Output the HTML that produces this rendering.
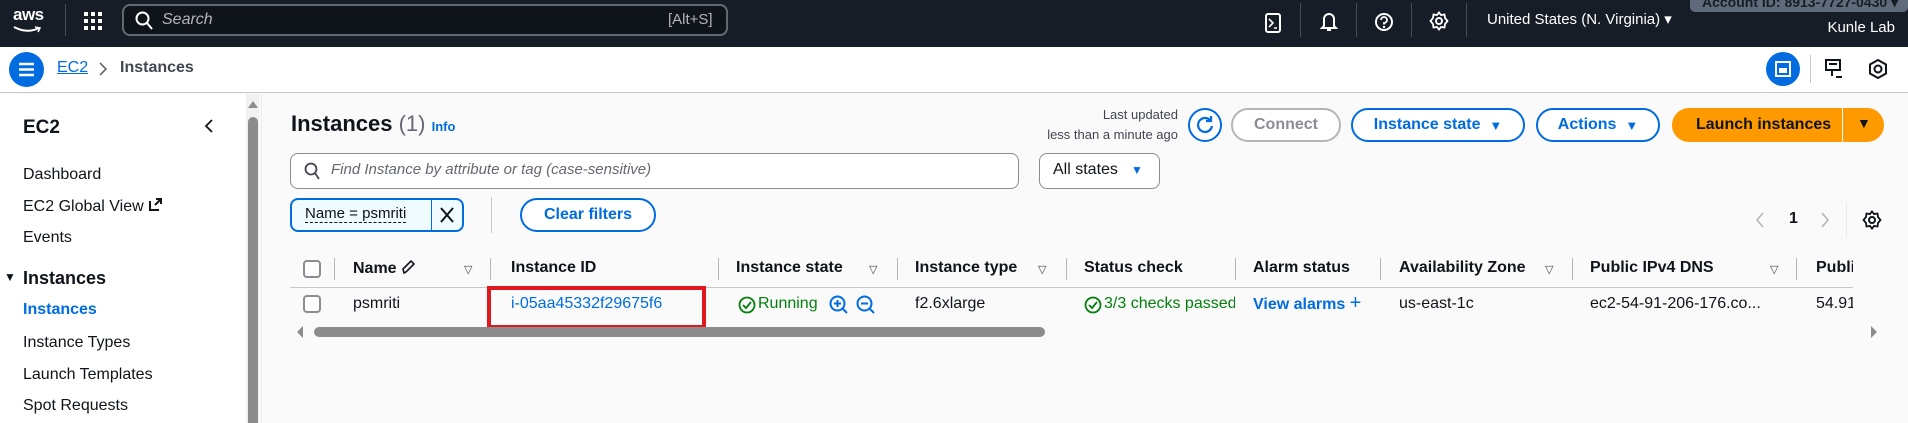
<!DOCTYPE html>
<html><head><meta charset="utf-8"><style>
*{box-sizing:border-box;margin:0;padding:0}
body{width:1908px;height:423px;overflow:hidden;font-family:"Liberation Sans",sans-serif;color:#0f141a;background:#fafafa;position:relative;font-size:16px}
.a{position:absolute;white-space:nowrap}
.top{position:absolute;left:0;top:0;width:1908px;height:47px;background:#161d26;color:#fff}
.crumb{position:absolute;left:0;top:47px;width:1908px;height:46px;background:#fff;border-bottom:1px solid #c6c6cd}
.side{position:absolute;left:0;top:94px;width:246px;height:329px;background:#fff}
.btn{position:absolute;border:2px solid #006ce0;border-radius:20px;color:#006ce0;font-weight:bold;font-size:16px;display:flex;align-items:center;justify-content:center;background:#fff}
.hd{font-weight:bold;font-size:16px;color:#0f141a;top:259px}
.sep{position:absolute;top:258px;width:1px;height:22px;background:#b4b4bb}
.tri{font-size:11px;color:#424650}
.nav{left:23px;font-size:16px;color:#0f141a}
.cb{position:absolute;width:18px;height:18px;border:2px solid #8c8c94;border-radius:4px;background:#fff}
</style></head><body>
<div class="top">
 <div class="a" style="left:13px;top:5px;font-size:17px;font-weight:bold;letter-spacing:-0.5px">aws</div>
 <svg class="a" style="left:12px;top:25px" width="30" height="10"><path d="M2 2 Q15 9 27 3" stroke="#fff" stroke-width="2" fill="none"/><path d="M23 2 L28 3 L26 7" stroke="#fff" stroke-width="1.5" fill="none"/></svg>
 <div class="a" style="left:65px;top:4px;width:1px;height:32px;background:#414d5c"></div>
 <svg class="a" style="left:84px;top:12px" width="18" height="18" fill="#fff"><rect x="0" y="0" width="4" height="4"/><rect x="7" y="0" width="4" height="4"/><rect x="14" y="0" width="4" height="4"/><rect x="0" y="7" width="4" height="4"/><rect x="7" y="7" width="4" height="4"/><rect x="14" y="7" width="4" height="4"/><rect x="0" y="14" width="4" height="4"/><rect x="7" y="14" width="4" height="4"/><rect x="14" y="14" width="4" height="4"/></svg>
 <div class="a" style="left:122px;top:4px;width:606px;height:32px;border:2px solid #656871;border-radius:8px;background:#0f141a"></div>
 <svg class="a" style="left:135px;top:11px" width="18" height="20"><circle cx="7.5" cy="7.5" r="6" stroke="#fff" stroke-width="2" fill="none"/><path d="M12 12 L17 18" stroke="#fff" stroke-width="2"/></svg>
 <div class="a" style="left:162px;top:11px;font-style:italic;color:#b4b4bb;font-size:16px">Search</div>
 <div class="a" style="left:668px;top:11px;color:#b4b4bb;font-size:15px">[Alt+S]</div>
 <svg class="a" style="left:1265px;top:13px" width="16" height="20"><rect x="1" y="1" width="14" height="18" rx="2" stroke="#fff" stroke-width="2" fill="none"/><path d="M4 6 L8 10 L4 14 M9 15 H12" stroke="#fff" stroke-width="1.6" fill="none"/></svg>
 <div class="a" style="left:1300px;top:3px;width:1px;height:34px;background:#414d5c"></div>
 <svg class="a" style="left:1320px;top:11px" width="18" height="22"><path d="M4 15 V8 A5 5 0 0 1 14 8 V15 L16 17 H2 Z" stroke="#fff" stroke-width="2" fill="none"/><path d="M7 19 H11" stroke="#fff" stroke-width="2"/></svg>
 <div class="a" style="left:1356px;top:3px;width:1px;height:34px;background:#414d5c"></div>
 <svg class="a" style="left:1374px;top:12px" width="20" height="20"><circle cx="10" cy="10" r="8" stroke="#fff" stroke-width="2" fill="none"/><path d="M7 8 A3 3 0 1 1 10 11 V12.5" stroke="#fff" stroke-width="1.8" fill="none"/><circle cx="10" cy="15" r="1.2" fill="#fff"/></svg>
 <div class="a" style="left:1411px;top:3px;width:1px;height:34px;background:#414d5c"></div>
 <svg class="a" style="left:1429px;top:11px" width="20" height="20"><circle cx="10" cy="10" r="3" stroke="#fff" stroke-width="2" fill="none"/><path d="M10 1.5 L12 4 L15.5 3.5 L16 7 L18.5 10 L16 13 L15.5 16.5 L12 16 L10 18.5 L8 16 L4.5 16.5 L4 13 L1.5 10 L4 7 L4.5 3.5 L8 4 Z" stroke="#fff" stroke-width="1.8" fill="none"/></svg>
 <div class="a" style="left:1466px;top:3px;width:1px;height:34px;background:#414d5c"></div>
 <div class="a" style="left:1487px;top:10px;font-size:15px;color:#fff">United States (N. Virginia) ▾</div>
 <div class="a" style="left:1690px;top:-8px;width:218px;height:20px;background:#5f6b7a;border-radius:5px;font-size:14px;font-weight:bold;color:#161d26;padding:3px 0 0 12px;line-height:14px">Account ID: 8913-7727-0430 ▾</div>
 <div class="a" style="right:13px;top:19px;font-size:15px;color:#fff">Kunle Lab</div>
</div>
<div class="crumb">
 <div class="a" style="left:9px;top:5px;width:35px;height:35px;border-radius:50%;background:#006ce0"></div>
 <svg class="a" style="left:18px;top:15px" width="17" height="15"><path d="M1 2 H16 M1 7.5 H16 M1 13 H16" stroke="#fff" stroke-width="2.5"/></svg>
 <div class="a" style="left:57px;top:12px;color:#006ce0;font-size:16px;text-decoration:underline">EC2</div>
 <svg class="a" style="left:98px;top:14px" width="10" height="16"><path d="M2 2 L8 8 L2 14" stroke="#656871" stroke-width="1.6" fill="none"/></svg>
 <div class="a" style="left:120px;top:12px;font-size:16px;font-weight:bold;color:#424650">Instances</div>
 <div class="a" style="left:1766px;top:5px;width:34px;height:34px;border-radius:50%;background:#006ce0"></div>
 <svg class="a" style="left:1774px;top:13px" width="18" height="18"><rect x="2" y="2" width="14" height="14" stroke="#fff" stroke-width="2" fill="none"/><rect x="5" y="8" width="8" height="5" fill="#fff"/></svg>
 <div class="a" style="left:1810px;top:8px;width:1px;height:28px;background:#c6c6cd"></div>
 <svg class="a" style="left:1824px;top:11px" width="20" height="22"><rect x="2" y="2" width="14" height="10" stroke="#0f141a" stroke-width="2" fill="none"/><path d="M5 6 H13 M8 12 V18 M12 19 H18" stroke="#0f141a" stroke-width="2"/></svg>
 <svg class="a" style="left:1868px;top:12px" width="20" height="20"><path d="M10 1 L18 5.5 V14.5 L10 19 L2 14.5 V5.5 Z" stroke="#0f141a" stroke-width="2" fill="none"/><circle cx="10" cy="10" r="3.5" stroke="#0f141a" stroke-width="2" fill="none"/></svg>
</div>
<div class="side">
 <div class="a" style="left:23px;top:23px;font-size:19px;font-weight:bold">EC2</div>
 <svg class="a" style="left:204px;top:24px" width="10" height="16"><path d="M8 2 L2 8 L8 14" stroke="#0f141a" stroke-width="1.8" fill="none"/></svg>
</div>
<div class="a nav" style="top:166px">Dashboard</div>
<div class="a nav" style="top:198px">EC2 Global View <svg width="15" height="14" style="vertical-align:-1px"><path d="M2 3 V12 H11 M7 7 L13 1 M8 1 H13 V6" stroke="#0f141a" stroke-width="2" fill="none"/></svg></div>
<div class="a nav" style="top:229px">Events</div>
<div class="a" style="left:4px;top:270px;font-size:12px">▼</div>
<div class="a nav" style="top:268px;font-size:18px;font-weight:bold">Instances</div>
<div class="a nav" style="top:301px;color:#006ce0;font-weight:bold">Instances</div>
<div class="a nav" style="top:334px">Instance Types</div>
<div class="a nav" style="top:366px">Launch Templates</div>
<div class="a nav" style="top:397px">Spot Requests</div>
<div class="a" style="left:246px;top:94px;width:13px;height:329px;background:#f1f1f1"></div>
<div class="a" style="left:248px;top:117px;width:10px;height:306px;background:#8c8c8c;border-radius:5px 5px 0 0"></div>
<svg class="a" style="left:247px;top:99px" width="12" height="10"><path d="M1 9 L6 2 L11 9 Z" fill="#8c8c8c"/></svg>
<div class="a" style="left:261px;top:94px;width:1px;height:329px;background:#e9ebed"></div>

<div class="a" style="left:291px;top:111px;font-size:22px;font-weight:bold">Instances <span style="font-weight:normal;color:#656871">(1)</span> <span style="font-size:13px;color:#006ce0">Info</span></div>
<div class="a" style="right:730px;top:105px;font-size:13px;color:#424650;text-align:right;line-height:20px">Last updated<br>less than a minute ago</div>
<div class="a" style="left:1188px;top:108px;width:34px;height:34px;border:2px solid #006ce0;border-radius:50%;background:#fff"></div>
<svg class="a" style="left:1195px;top:115px" width="20" height="20"><path d="M15 5 A7 7 0 1 0 17 11" stroke="#006ce0" stroke-width="2.2" fill="none"/><path d="M11 4 H16 V-1" stroke="#006ce0" stroke-width="2.2" fill="none" transform="translate(0,2)"/></svg>
<div class="btn" style="left:1231px;top:108px;width:110px;height:34px;border-color:#b4b4bb;color:#8c8c94">Connect</div>
<div class="btn" style="left:1351px;top:108px;width:174px;height:34px">Instance state&nbsp;&nbsp;<span style="font-size:13px">▼</span></div>
<div class="btn" style="left:1536px;top:108px;width:124px;height:34px">Actions&nbsp;&nbsp;<span style="font-size:13px">▼</span></div>
<div class="btn" style="left:1672px;top:108px;width:212px;height:34px;background:#ff9900;border-color:#ff9900;color:#0f141a;justify-content:flex-start;padding-left:22px">Launch instances</div>
<div class="a" style="left:1842px;top:108px;width:1px;height:34px;background:#fff"></div>
<div class="a" style="left:1857px;top:115px;font-size:14px">▼</div>

<div class="a" style="left:290px;top:153px;width:729px;height:36px;border:1.5px solid #8c8c94;border-radius:8px;background:#fff"></div>
<svg class="a" style="left:304px;top:162px" width="16" height="20"><circle cx="7" cy="7" r="5.5" stroke="#424650" stroke-width="1.8" fill="none"/><path d="M11 11 L15 17" stroke="#424650" stroke-width="1.8"/></svg>
<div class="a" style="left:331px;top:161px;font-size:15px;font-style:italic;color:#656871">Find Instance by attribute or tag (case-sensitive)</div>
<div class="a" style="left:1039px;top:153px;width:121px;height:36px;border:1.5px solid #8c8c94;border-radius:8px;background:#fff"></div>
<div class="a" style="left:1053px;top:161px;font-size:16px">All states</div>
<div class="a" style="left:1131px;top:163px;font-size:12px;color:#006ce0">▼</div>

<div class="a" style="left:290px;top:198px;width:174px;height:34px;border:2px solid #006ce0;border-radius:8px;background:#f0fbff"></div>
<div class="a" style="left:431px;top:200px;width:1px;height:30px;background:#006ce0"></div>
<div class="a" style="left:305px;top:205px;font-size:15px;border-bottom:1px dashed #0f141a;line-height:17px">Name = psmriti</div>
<svg class="a" style="left:439px;top:206px" width="16" height="18"><path d="M2 2 L14 16 M14 2 L2 16" stroke="#0f141a" stroke-width="2"/></svg>
<div class="a" style="left:491px;top:197px;width:1px;height:36px;background:#c6c6cd"></div>
<div class="btn" style="left:520px;top:198px;width:136px;height:34px">Clear filters</div>

<svg class="a" style="left:1754px;top:211px" width="12" height="18"><path d="M9 2 L3 9 L9 16" stroke="#b4b4bb" stroke-width="1.6" fill="none"/></svg>
<div class="a" style="left:1789px;top:210px;font-size:16px;font-weight:bold">1</div>
<svg class="a" style="left:1819px;top:211px" width="12" height="18"><path d="M3 2 L9 9 L3 16" stroke="#b4b4bb" stroke-width="1.6" fill="none"/></svg>
<div class="a" style="left:1846px;top:202px;width:1px;height:36px;background:#e9ebed"></div>
<svg class="a" style="left:1862px;top:210px" width="20" height="20"><circle cx="10" cy="10" r="3" stroke="#0f141a" stroke-width="2" fill="none"/><path d="M10 1.5 L12 4 L15.5 3.5 L16 7 L18.5 10 L16 13 L15.5 16.5 L12 16 L10 18.5 L8 16 L4.5 16.5 L4 13 L1.5 10 L4 7 L4.5 3.5 L8 4 Z" stroke="#0f141a" stroke-width="1.8" fill="none"/></svg>

<div class="cb" style="left:303px;top:260px"></div>
<div class="sep" style="left:334px"></div>
<div class="a hd" style="left:353px">Name <svg width="14" height="16" style="vertical-align:-2px"><path d="M3 14 L2 10 L10 2 L13 5 L5 13 Z" stroke="#0f141a" stroke-width="1.6" fill="none"/></svg></div>
<div class="a tri" style="left:464px;top:263px">▽</div>
<div class="sep" style="left:490px"></div>
<div class="a hd" style="left:511px">Instance ID</div>
<div class="sep" style="left:718px"></div>
<div class="a hd" style="left:736px">Instance state</div>
<div class="a tri" style="left:869px;top:263px">▽</div>
<div class="sep" style="left:897px"></div>
<div class="a hd" style="left:915px">Instance type</div>
<div class="a tri" style="left:1038px;top:263px">▽</div>
<div class="sep" style="left:1066px"></div>
<div class="a hd" style="left:1084px">Status check</div>
<div class="sep" style="left:1235px"></div>
<div class="a hd" style="left:1253px">Alarm status</div>
<div class="sep" style="left:1380px"></div>
<div class="a hd" style="left:1399px">Availability Zone</div>
<div class="a tri" style="left:1545px;top:263px">▽</div>
<div class="sep" style="left:1572px"></div>
<div class="a hd" style="left:1590px">Public IPv4 DNS</div>
<div class="a tri" style="left:1770px;top:263px">▽</div>
<div class="sep" style="left:1796px"></div>
<div class="a hd" style="left:1816px;width:37px;overflow:hidden">Public IPv4</div>
<div class="a" style="left:290px;top:287px;width:1563px;height:1px;background:#c6c6cd"></div>

<div class="cb" style="left:303px;top:295px"></div>
<div class="a" style="left:353px;top:295px">psmriti</div>
<div class="a" style="left:487px;top:286px;width:219px;height:43px;border:4px solid #e0191f"></div>
<div class="a" style="left:511px;top:295px;color:#006ce0">i-05aa45332f29675f6</div>
<svg class="a" style="left:738px;top:296px" width="18" height="18"><circle cx="9" cy="9" r="7.5" stroke="#037f0c" stroke-width="1.8" fill="none"/><path d="M5 9 L8 12 L13 6" stroke="#037f0c" stroke-width="1.8" fill="none"/></svg>
<div class="a" style="left:758px;top:295px;color:#037f0c">Running</div>
<svg class="a" style="left:829px;top:295px" width="20" height="20"><circle cx="8.5" cy="8.5" r="7" stroke="#006ce0" stroke-width="2" fill="none"/><path d="M5 8.5 H12 M8.5 5 V12 M13.5 13.5 L18 18" stroke="#006ce0" stroke-width="2"/></svg>
<svg class="a" style="left:856px;top:295px" width="20" height="20"><circle cx="8.5" cy="8.5" r="7" stroke="#006ce0" stroke-width="2" fill="none"/><path d="M5 8.5 H12 M13.5 13.5 L18 18" stroke="#006ce0" stroke-width="2"/></svg>
<div class="a" style="left:915px;top:295px">f2.6xlarge</div>
<svg class="a" style="left:1084px;top:296px" width="18" height="18"><circle cx="9" cy="9" r="7.5" stroke="#037f0c" stroke-width="1.8" fill="none"/><path d="M5 9 L8 12 L13 6" stroke="#037f0c" stroke-width="1.8" fill="none"/></svg>
<div class="a" style="left:1104px;top:295px;color:#037f0c;width:131px;overflow:hidden">3/3 checks passed</div>
<div class="a" style="left:1253px;top:295px;color:#006ce0;font-weight:bold">View alarms <span style="font-size:20px;font-weight:normal;line-height:16px">+</span></div>
<div class="a" style="left:1399px;top:295px">us-east-1c</div>
<div class="a" style="left:1590px;top:295px">ec2-54-91-206-176.co...</div>
<div class="a" style="left:1816px;top:295px;width:37px;overflow:hidden">54.91.206</div>

<svg class="a" style="left:296px;top:326px" width="8" height="12"><path d="M7 0 L1 6 L7 12 Z" fill="#8c8c8c"/></svg>
<div class="a" style="left:314px;top:327px;width:731px;height:10px;background:#8c8c8c;border-radius:5px"></div>
<svg class="a" style="left:1870px;top:326px" width="8" height="12"><path d="M1 0 L7 6 L1 12 Z" fill="#8c8c8c"/></svg>
</body></html>
